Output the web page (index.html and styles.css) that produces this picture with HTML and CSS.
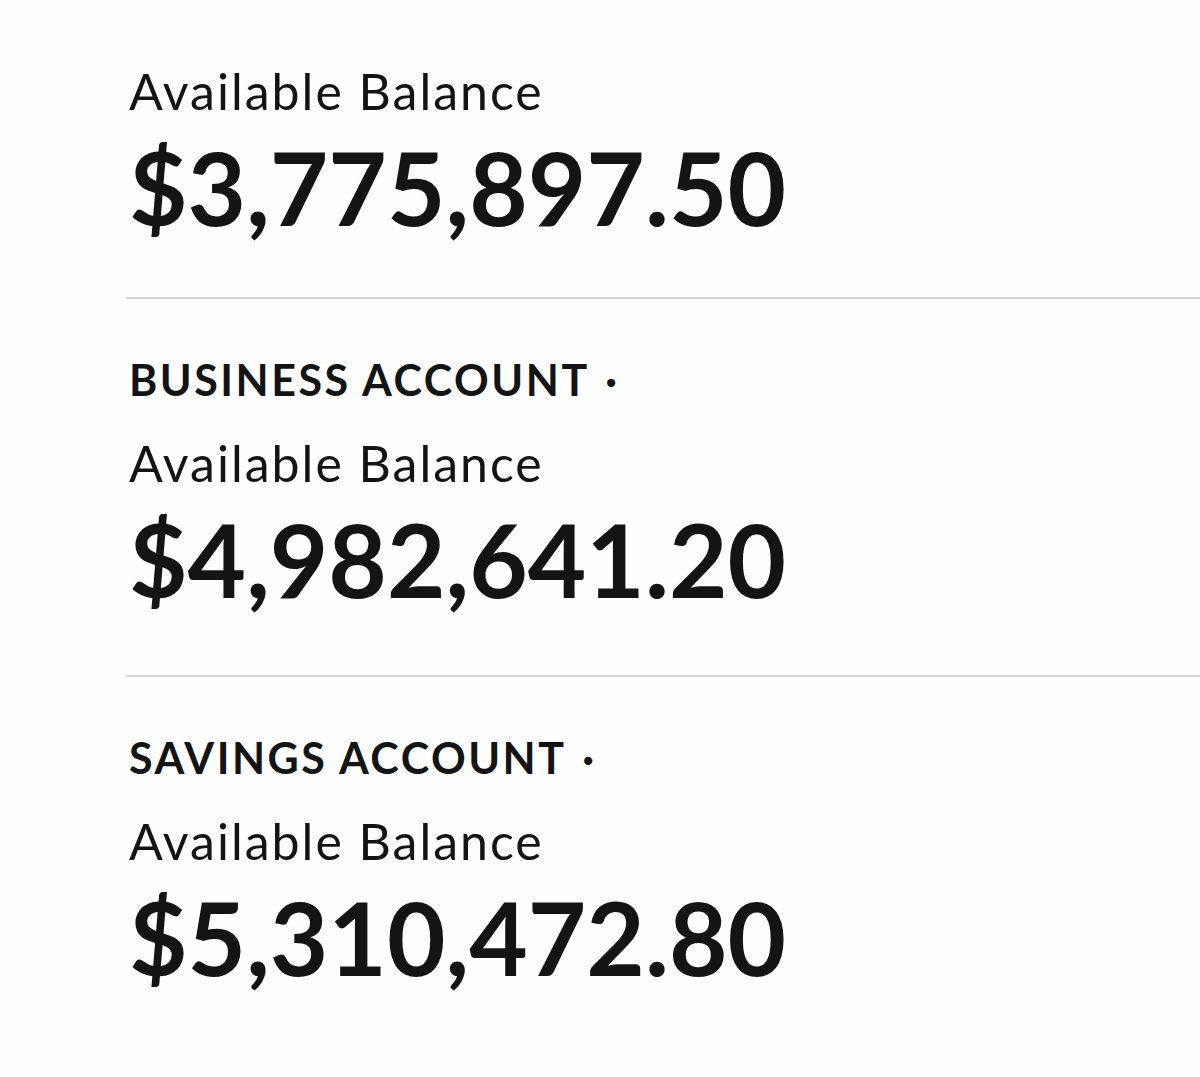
FILE: index.html
```html
<!DOCTYPE html>
<html lang="en">
<head>
    <meta charset="UTF-8">
    <meta name="viewport" content="width=device-width, initial-scale=1.0">
    <title>Accounts</title>
    <link rel="stylesheet" href="styles.css">
</head>
<body>
    <div class="accounts">
        <div class="account first">
            <div class="caption">Available Balance</div>
            <div class="amount">$3,775,897.50</div>
        </div>
        <div class="account">
            <div class="type">BUSINESS ACCOUNT <span class="dot">·</span></div>
            <div class="caption">Available Balance</div>
            <div class="amount">$4,982,641.20</div>
        </div>
        <div class="account last">
            <div class="type">SAVINGS ACCOUNT <span class="dot">·</span></div>
            <div class="caption">Available Balance</div>
            <div class="amount">$5,310,472.80</div>
        </div>
    </div>
</body>
</html>
```

FILE: styles.css
```css
body {
    margin: 0;
    background: #fefefe;
    color: #141414;
    font-family: 'Lato', sans-serif;
}

.account {
    margin-left: 126px;
    padding: 56px 0 61px 3px;
    border-bottom: 2px solid #d4d4dc;
}

.account.first {
    padding-top: 61px;
    padding-bottom: 55px;
}

.account.last {
    border-bottom: none;
}

/* account type heading, e.g. BUSINESS ACCOUNT */
.type {
    font-size: 43px;
    font-weight: 700;
    line-height: 50px;
    letter-spacing: 2.5px;
    margin-bottom: 28px;
}

.dot {
    letter-spacing: 0;
    padding-left: 4px;
}

.caption {
    font-size: 50px;
    line-height: 60px;
    letter-spacing: 2px;
    margin-bottom: 11px;
}

.amount {
    font-size: 101px;
    font-weight: 700;
    line-height: 110px;
    font-variant-numeric: tabular-nums;
}
```
